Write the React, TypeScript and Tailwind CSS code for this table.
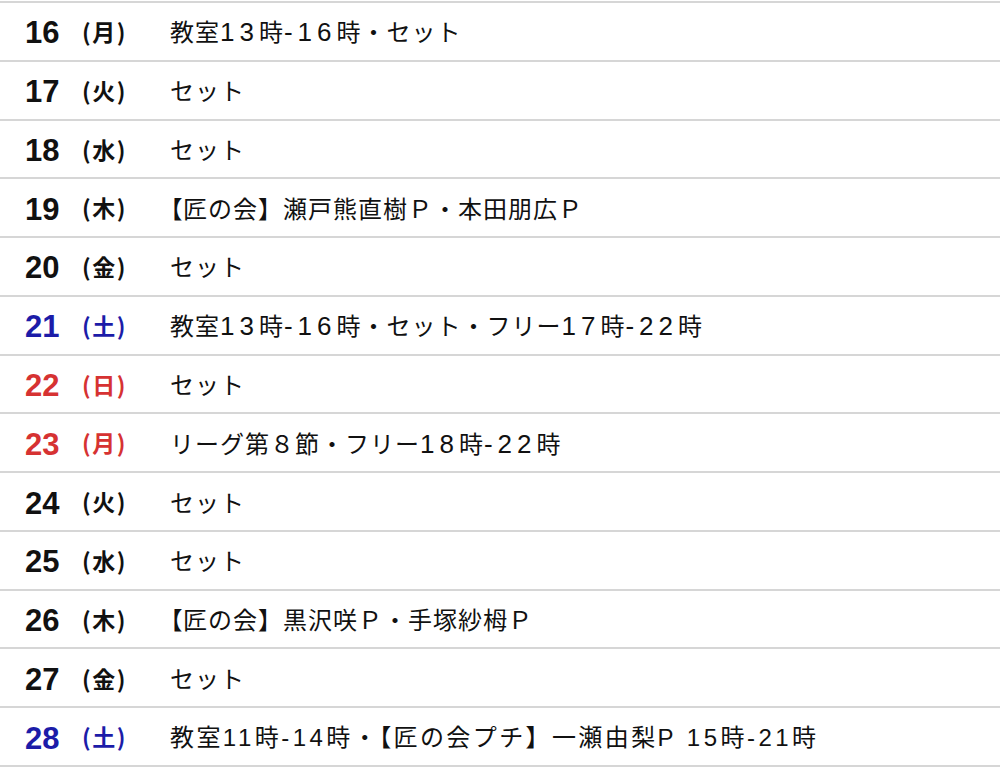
const rows: { d: number; w: string; t: string; c?: "blue" | "red"; tight?: boolean }[] = [
  { d: 16, w: "月", t: "教室13時-16時・セット" },
  { d: 17, w: "火", t: "セット" },
  { d: 18, w: "水", t: "セット" },
  { d: 19, w: "木", t: "【匠の会】瀬戸熊直樹Ｐ・本田朋広Ｐ" },
  { d: 20, w: "金", t: "セット" },
  { d: 21, w: "土", t: "教室13時-16時・セット・フリー17時-22時", c: "blue" },
  { d: 22, w: "日", t: "セット", c: "red" },
  { d: 23, w: "月", t: "リーグ第８節・フリー18時-22時", c: "red" },
  { d: 24, w: "火", t: "セット" },
  { d: 25, w: "水", t: "セット" },
  { d: 26, w: "木", t: "【匠の会】黒沢咲Ｐ・手塚紗栂Ｐ" },
  { d: 27, w: "金", t: "セット" },
  { d: 28, w: "土", t: "教室11時-14時・【匠の会プチ】一瀬由梨P 15時-21時", c: "blue", tight: true },
];

const colorClass = {
  blue: "text-[#1c1ca8]",
  red: "text-[#d63232]",
};

// split into runs of half-width ascii, opening bracket and the rest
function runs(t: string) {
  const out: { s: string; k: "a" | "b" | "j" }[] = [];
  for (const ch of t) {
    const k = /[\x20-\x7e]/.test(ch) ? "a" : ch === "【" ? "b" : "j";
    const last = out[out.length - 1];
    if (last && last.k === k) last.s += ch;
    else out.push({ s: ch, k });
  }
  return out;
}

function Line({ t, tight }: { t: string; tight?: boolean }) {
  return (
    <span
      className={`whitespace-pre text-[24px] text-[#111] ${tight ? "tracking-[2.4px]" : "tracking-[1px]"}`}
    >
      {runs(t).map((r, i) =>
        r.k === "a" ? (
          <span
            key={i}
            className={
              tight
                ? "font-['Liberation_Sans',sans-serif] tracking-[3.5px]"
                : "font-['Liberation_Sans',sans-serif] text-[26px] leading-none tracking-[5px]"
            }
          >
            {r.s}
          </span>
        ) : r.k === "b" && !tight ? (
          <span key={i} className="[font-feature-settings:'palt']">
            {r.s}
          </span>
        ) : (
          <span key={i}>{r.s}</span>
        )
      )}
    </span>
  );
}

export default function App() {
  return (
    <div className="min-h-screen bg-white pt-px font-['Noto_Sans_CJK_JP',sans-serif]">
      <div className="border-t-2 border-[#d6d6d6]">
        {rows.map((r) => {
          const col = r.c ? colorClass[r.c] : "text-[#111]";
          return (
            <div
              key={r.d}
              className="flex h-[58.77px] items-center border-b-2 border-[#d6d6d6]"
            >
              <span
                className={`mt-[3px] w-[82px] pl-[25px] font-['Liberation_Sans',sans-serif] text-[31px] leading-none font-bold ${col}`}
              >
                {r.d}
              </span>
              <span className={`w-[88px] text-[23px] font-bold tracking-[1.5px] ${col}`}>({r.w})</span>
              <Line t={r.t} tight={r.tight} />
            </div>
          );
        })}
      </div>
    </div>
  );
}
